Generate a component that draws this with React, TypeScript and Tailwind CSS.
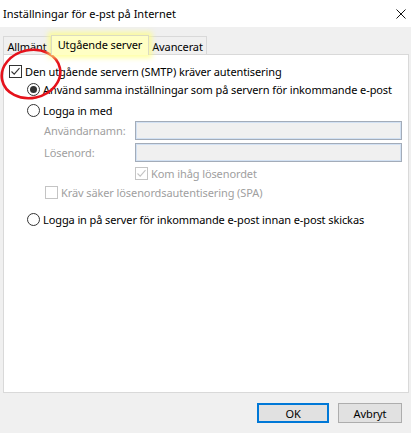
import React from "react";

const font = { fontFamily: '"Noto Sans", "Liberation Sans", sans-serif' };

function Check({ checked, disabled }: { checked?: boolean; disabled?: boolean }) {
  const c = disabled ? "#c4c4c4" : "#333333";
  return (
    <span
      className={`w-[13px] h-[13px] shrink-0 border bg-white flex items-center justify-center ${
        disabled ? "border-[#c4c4c4]" : "border-[#333333]"
      }`}
    >
      {checked && (
        <svg width="11" height="11" viewBox="0 0 11 11">
          <path d="M1.5 5.5 L4.2 8.2 L9.5 2.2" fill="none" stroke={c} strokeWidth="1.1" />
        </svg>
      )}
    </span>
  );
}

function Radio({ checked }: { checked?: boolean }) {
  return (
    <span className="w-[13px] h-[13px] shrink-0 rounded-full border border-[#333333] bg-white flex items-center justify-center">
      {checked && <span className="w-[7px] h-[7px] rounded-full bg-[#333333]" />}
    </span>
  );
}

function Field() {
  return (
    <div className="w-[267px] h-[19px] bg-[#f0f0f0] border border-[#a3acb9] shadow-[inset_0_0_0_1px_#d2e1f3]" />
  );
}

export default function App() {
  return (
    <div
      className="w-[411px] h-[433px] bg-[#f0f0f0] flex flex-col relative overflow-hidden text-[11px] tracking-[-0.1px] text-black leading-none whitespace-nowrap"
      style={font}
    >
      {/* title bar */}
      <div className="h-[27px] bg-white flex items-center justify-between pl-[3px] pr-[4px]">
        <span className="text-[11px] tracking-normal pb-[1px]">Inställningar för e-pst på Internet</span>
        <svg width="10" height="10" viewBox="0 0 10 10" className="mr-[1px] mt-[1px]">
          <path d="M0.5 0.5 L9.5 9.5 M9.5 0.5 L0.5 9.5" stroke="#111" strokeWidth="1" />
        </svg>
      </div>

      {/* tabs */}
      <div className="h-[27px] flex items-end pl-[3px]">
        <div className="w-[48px] h-[18px] border border-b-0 border-[#d9d9d9] bg-[#f0f0f0] flex items-center justify-center pt-[1px]">
          Allmänt
        </div>
        <div className="w-[98px] h-[20px] border border-b-0 border-[#dcdcc0] bg-[#ffffc4] shadow-[0_0_5px_3px_rgba(255,255,130,0.75)] flex items-center justify-center relative z-10 -mb-px pb-[3px]">
          Utgående server
        </div>
        <div className="w-[58px] h-[18px] border border-b-0 border-l-0 border-[#d9d9d9] bg-[#f0f0f0] flex items-center justify-center pt-[1px]">
          Avancerat
        </div>
      </div>

      {/* panel */}
      <div className="flex-1 mx-[3px] mr-[2px] bg-white border border-[#d9d9d9] flex flex-col pt-[7px]">
        <div className="h-[18px] flex items-center pl-[5px] gap-[3px]">
          <Check checked />
          <span>Den utgående servern (SMTP) kräver autentisering</span>
        </div>
        <div className="h-[18px] flex items-center pl-[23px] gap-[3px]">
          <Radio checked />
          <span>Använd samma inställningar som på servern för inkommande e-post</span>
        </div>
        <div className="h-[20px] mt-[2px] flex items-center pl-[23px] gap-[3px]">
          <Radio />
          <span>Logga in med</span>
        </div>
        <div className="h-[19px] mt-[1px] flex items-center pl-[40px] text-[#a0a0a0]">
          <span className="w-[91px]">Användarnamn:</span>
          <Field />
        </div>
        <div className="h-[19px] mt-[3px] flex items-center pl-[40px] text-[#a0a0a0]">
          <span className="w-[91px]">Lösenord:</span>
          <Field />
        </div>
        <div className="h-[18px] mt-[2px] flex items-center pl-[131px] gap-[3px] text-[#a0a0a0]">
          <Check checked disabled />
          <span>Kom ihåg lösenordet</span>
        </div>
        <div className="h-[18px] mt-[1px] flex items-center pl-[41px] gap-[3px] text-[#a0a0a0]">
          <Check disabled />
          <span>Kräv säker lösenordsautentisering (SPA)</span>
        </div>
        <div className="h-[18px] mt-[9px] flex items-center pl-[23px] gap-[3px]">
          <Radio />
          <span>Logga in på server för inkommande e-post innan e-post skickas</span>
        </div>
      </div>

      {/* footer */}
      <div className="h-[40px] flex items-start justify-end pt-[10px] pr-[9px] gap-[9px]">
        <button className="w-[72px] h-[20px] bg-[#e1e1e1] border-2 border-[#0078d7] flex items-center justify-center">
          OK
        </button>
        <button className="w-[64px] h-[20px] bg-[#e1e1e1] border border-[#adadad] flex items-center justify-center">
          Avbryt
        </button>
      </div>

      {/* red annotation circle */}
      <svg className="absolute left-0 top-[46px] pointer-events-none" width="70" height="58" viewBox="0 0 70 58">
        <ellipse cx="31" cy="28" rx="29.5" ry="24" transform="rotate(-12 31 28)" fill="none" stroke="#e5121b" strokeWidth="2.6" />
      </svg>
    </div>
  );
}
